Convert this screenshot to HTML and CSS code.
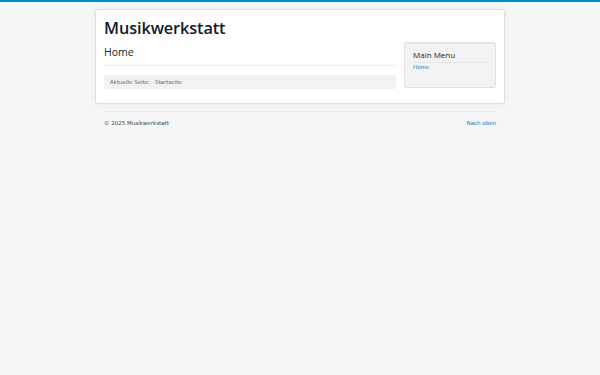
FILE: index.html
```html
<!DOCTYPE html>
<html lang="de">
<head>
    <meta charset="UTF-8">
    <meta name="viewport" content="width=device-width, initial-scale=1.0">
    <title>Musikwerkstatt - Home</title>
    <link rel="stylesheet" href="styles.css">
</head>
<body class="site">
    <div class="body">
        <div class="container">
            <header class="header">
                <a class="brand" href="#">Musikwerkstatt</a>
            </header>
            <div class="row">
                <main class="content">
                    <div class="page-header">
                        <h1>Home</h1>
                    </div>
                    <ul class="breadcrumb">
                        <li class="active">Aktuelle Seite:</li>
                        <li>Startseite</li>
                    </ul>
                </main>
                <aside class="sidebar">
                    <div class="well">
                        <h3 class="page-header">Main Menu</h3>
                        <ul class="menu">
                            <li><a href="#">Home</a></li>
                        </ul>
                    </div>
                </aside>
            </div>
        </div>
    </div>

    <footer class="footer">
        <hr>
        <div class="footer-row">
            <p>&copy; 2025 Musikwerkstatt</p>
            <a href="#top" id="back-top">Nach oben</a>
        </div>
    </footer>
</body>
</html>
```

FILE: styles.css
```css
body, html {
    margin: 0;
    padding: 0;
}

body.site {
    border-top: 2px solid #0088cc;
    background-color: #f4f6f7;
    padding: 7px 95px 0;
    font-family: "DejaVu Sans", sans-serif;
    font-size: 5.5px;
    color: #444;
    min-height: 366px;
}

a {
    color: #1a7bb9;
    text-decoration: none;
}

.container {
    background: #fff;
    border: 1px solid rgba(0, 0, 0, 0.12);
    border-radius: 3px;
    box-shadow: 0 0 5px rgba(0, 0, 0, 0.05);
    padding: 8px 8px 14px;
}

.brand {
    font-family: "Open Sans", sans-serif;
    font-size: 16.3px;
    font-weight: 600;
    letter-spacing: -0.1px;
    color: #10202a;
    line-height: 20px;
    display: block;
    margin-bottom: 4px;
}

.row {
    display: flex;
    gap: 8px;
    align-items: flex-start;
}

.content {
    flex: 1;
}

.sidebar {
    width: 92px;
}

.content .page-header {
    border-bottom: 1px solid #eee;
    padding: 4px 0 6px;
    margin-bottom: 9px;
}

h1 {
    font-family: "Open Sans", sans-serif;
    font-size: 10.5px;
    font-weight: 400;
    line-height: 13px;
    margin: 0;
    color: #222;
}

.breadcrumb {
    list-style: none;
    margin: 0;
    padding: 3px 6px;
    background: #f2f2f2;
    border-radius: 2px;
    display: flex;
    gap: 5px;
    line-height: 8px;
    color: #666;
}

.well {
    background: #f3f3f3;
    border: 1px solid #e3e3e3;
    border-radius: 2px;
    box-shadow: inset 0 1px 1px rgba(0, 0, 0, 0.05);
    padding: 7px 8px 15px;
    height: 22px;
}

.well .page-header {
    font-family: "Open Sans", sans-serif;
    font-size: 8px;
    font-weight: 400;
    line-height: 10px;
    margin: 0 0 1px;
    padding-bottom: 2px;
    border-bottom: 1px solid #e6e6e6;
    color: #222;
}

.menu {
    list-style: none;
    margin: 0;
    padding: 0;
    line-height: 7px;
}

.footer {
    padding: 0 9px;
}

.footer hr {
    border: 0;
    border-top: 1px solid #e8eaec;
    margin: 7px 0 8px;
}

.footer-row {
    display: flex;
    justify-content: space-between;
    line-height: 7px;
}

.footer p {
    margin: 0;
}
```
